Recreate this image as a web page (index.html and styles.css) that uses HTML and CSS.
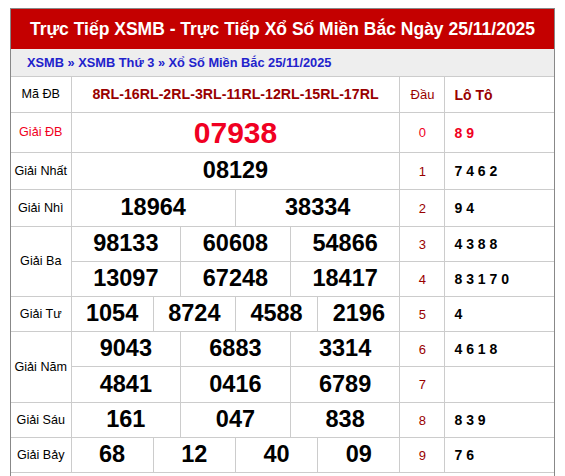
FILE: index.html
```html
<!DOCTYPE html>
<html lang="vi">
<head>
<meta charset="utf-8">
<title>XSMB 25/11/2025</title>
<link rel="stylesheet" href="styles.css">
</head>
<body>
<div class="box">
  <h1 class="title">Trực Tiếp XSMB - Trực Tiếp Xổ Số Miền Bắc Ngày 25/11/2025</h1>
  <div class="crumbs"><a href="#">XSMB</a> » <a href="#">XSMB Thứ 3</a> » <a href="#">Xổ Số Miền Bắc 25/11/2025</a></div>
  <table class="kq">
    <colgroup>
      <col class="c-label">
      <col class="c-sub"><col class="c-sub"><col class="c-sub"><col class="c-sub">
      <col class="c-sub"><col class="c-sub"><col class="c-sub"><col class="c-sub">
      <col class="c-sub"><col class="c-sub"><col class="c-sub"><col class="c-sub">
      <col class="c-dau">
      <col class="c-loto">
    </colgroup>
    <tr class="r-head">
      <td class="label">Mã ĐB</td>
      <td colspan="12" class="codes">8RL-16RL-2RL-3RL-11RL-12RL-15RL-17RL</td>
      <td class="dau">Đầu</td>
      <td class="loto loto-h">Lô Tô</td>
    </tr>
    <tr class="r-db">
      <td class="label red">Giải ĐB</td>
      <td colspan="12" class="num db">07938</td>
      <td class="dau red">0</td>
      <td class="loto red">8 9</td>
    </tr>
    <tr class="r-37">
      <td class="label">Giải Nhất</td>
      <td colspan="12" class="num">08129</td>
      <td class="dau">1</td>
      <td class="loto">7 4 6 2</td>
    </tr>
    <tr class="r-37">
      <td class="label">Giải Nhì</td>
      <td colspan="6" class="num">18964</td>
      <td colspan="6" class="num">38334</td>
      <td class="dau">2</td>
      <td class="loto">9 4</td>
    </tr>
    <tr class="r-35">
      <td rowspan="2" class="label">Giải Ba</td>
      <td colspan="4" class="num">98133</td>
      <td colspan="4" class="num">60608</td>
      <td colspan="4" class="num">54866</td>
      <td class="dau">3</td>
      <td class="loto">4 3 8 8</td>
    </tr>
    <tr class="r-35">
      <td colspan="4" class="num">13097</td>
      <td colspan="4" class="num">67248</td>
      <td colspan="4" class="num">18417</td>
      <td class="dau">4</td>
      <td class="loto">8 3 1 7 0</td>
    </tr>
    <tr class="r-35">
      <td class="label">Giải Tư</td>
      <td colspan="3" class="num">1054</td>
      <td colspan="3" class="num">8724</td>
      <td colspan="3" class="num">4588</td>
      <td colspan="3" class="num">2196</td>
      <td class="dau">5</td>
      <td class="loto">4</td>
    </tr>
    <tr class="r-35">
      <td rowspan="2" class="label">Giải Năm</td>
      <td colspan="4" class="num">9043</td>
      <td colspan="4" class="num">6883</td>
      <td colspan="4" class="num">3314</td>
      <td class="dau">6</td>
      <td class="loto">4 6 1 8</td>
    </tr>
    <tr class="r-36">
      <td colspan="4" class="num">4841</td>
      <td colspan="4" class="num">0416</td>
      <td colspan="4" class="num">6789</td>
      <td class="dau">7</td>
      <td class="loto"></td>
    </tr>
    <tr class="r-35">
      <td class="label">Giải Sáu</td>
      <td colspan="4" class="num">161</td>
      <td colspan="4" class="num">047</td>
      <td colspan="4" class="num">838</td>
      <td class="dau">8</td>
      <td class="loto">8 3 9</td>
    </tr>
    <tr class="r-35">
      <td class="label">Giải Bảy</td>
      <td colspan="3" class="num">68</td>
      <td colspan="3" class="num">12</td>
      <td colspan="3" class="num">40</td>
      <td colspan="3" class="num">09</td>
      <td class="dau">9</td>
      <td class="loto">7 6</td>
    </tr>
  </table>
  <div class="box-foot"></div>
</div>
</body>
</html>
```

FILE: styles.css
```css
html, body {
  margin: 0;
  padding: 0;
  overflow: hidden;
  background: #fff;
}

body {
  font-family: "Liberation Sans", Arial, sans-serif;
  color: #000;
}

.box {
  margin: 8px 10px 0 10px;
  border: 1px solid #888;
  border-bottom: none;
}

.title {
  margin: 0;
  height: 40px;
  line-height: 40px;
  background: #c40000;
  color: #fff;
  font-size: 17.5px;
  font-weight: bold;
  text-align: center;
}

.crumbs {
  height: 27px;
  line-height: 27px;
  padding-left: 16px;
  background: #eee;
  border-bottom: 1px solid #ccc;
  font-size: 12.8px;
  font-weight: bold;
  color: #2222cc;
}

.crumbs a {
  color: #2222cc;
  text-decoration: none;
}

.kq {
  width: 100%;
  border-collapse: collapse;
  table-layout: fixed;
  border-style: hidden hidden solid hidden;
  border-width: 1px;
  border-color: #ccc;
}

.c-label { width: 60px; }
.c-sub { width: 27.4167px; }
.c-dau { width: 45px; }
.c-loto { width: 109px; }

.kq td {
  border: 1px solid #ccc;
  padding: 0;
  text-align: center;
  vertical-align: middle;
  line-height: 1;
}

.r-head td { height: 35px; }
.r-db td { height: 39px; }
.r-37 td { height: 36px; }
.r-36 td { height: 35px; }
.r-35 td { height: 34px; }

.label {
  font-size: 12.6px;
}

.codes {
  font-size: 14.2px;
  font-weight: bold;
  color: #990000;
}

.num {
  font-size: 23.5px;
  font-weight: bold;
}

.num.db {
  font-size: 30px;
  color: #f00022;
}

.kq td.dau {
  font-size: 13px;
  color: #990000;
}

.kq td.loto {
  text-align: left;
  padding-left: 9px;
  font-size: 14px;
  font-weight: bold;
}

.kq td.loto-h {
  color: #990000;
}

.kq td.red {
  color: #f00022;
}

.box-foot {
  height: 20px;
}
```
